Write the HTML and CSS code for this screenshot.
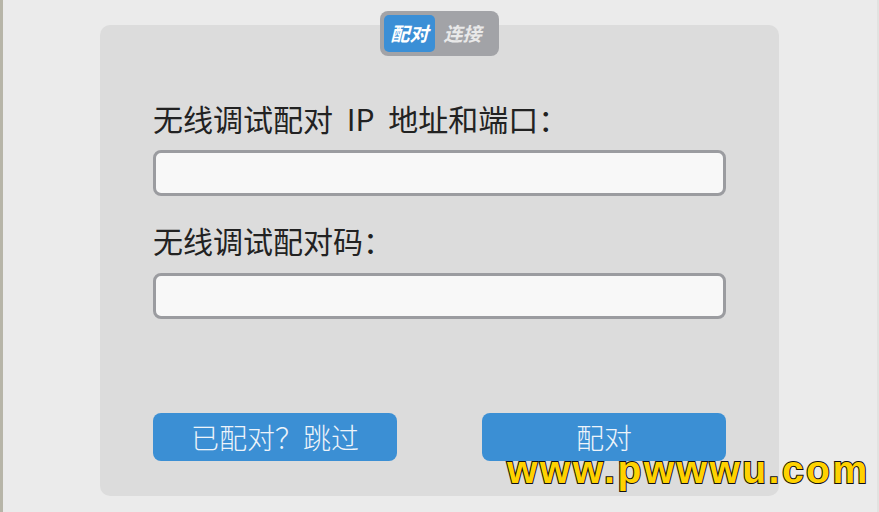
FILE: index.html
```html
<!DOCTYPE html>
<html lang="zh-CN">
<head>
  <meta charset="UTF-8" />
  <meta name="viewport" content="width=device-width, initial-scale=1.0"/>
  <title>无线调试配对</title>
  <link rel="stylesheet" href="styles.css">
</head>
<body>
  <div class="window">
    <div class="panel">
      <div class="tabs">
        <span class="tab active">配对</span>
        <span class="tab">连接</span>
      </div>

      <label class="label" for="endereco">无线调试配对 IP 地址和端口：</label>
      <input class="field" type="text" id="endereco" />

      <label class="label label-code" for="codigo">无线调试配对码：</label>
      <input class="field field-code" type="text" id="codigo" />

      <div class="actions">
        <button class="btn">已配对？跳过</button>
        <button class="btn">配对</button>
      </div>
    </div>

    <div class="watermark">www.pwwwu.com</div>
  </div>
</body>
</html>
```

FILE: styles.css
```css
html, body {
  margin: 0;
  height: 100%;
}

body {
  font-family: "Noto Sans CJK SC", "Noto Sans", sans-serif;
  background: #ebebeb;
}

.window {
  position: relative;
  height: 100%;
  box-sizing: border-box;
  padding-top: 25px;
  border-left: 3px solid #b7b5a8;
  border-right: 2px solid #e2e2e0;
}

.panel {
  position: relative;
  width: 679px;
  height: 471px;
  margin: 0 auto 0 97px;
  box-sizing: border-box;
  padding: 75px 53px 35px;
  background: #dcdcdc;
  border-radius: 10px;
  display: flex;
  flex-direction: column;
}

.tabs {
  position: absolute;
  top: -14px;
  left: 280px;
  width: 119px;
  height: 45px;
  box-sizing: border-box;
  padding: 4px;
  background: #a2a3a7;
  border-radius: 8px;
  display: flex;
  gap: 2px;
}

.tab {
  width: 51px;
  height: 37px;
  line-height: 35px;
  text-align: center;
  font-size: 19px;
  font-weight: bold;
  font-style: italic;
  color: #e9e9e9;
  border-radius: 5px;
}

.tab.active {
  background: #3b8fd6;
  color: #fff;
}

.label {
  font-size: 30px;
  line-height: 36px;
  word-spacing: 7px;
  color: #222;
}

.label-code {
  margin-top: 26px;
}

.field {
  margin-top: 14px;
  height: 46px;
  box-sizing: border-box;
  border: 3px solid #9b9ca0;
  border-radius: 8px;
  background: #f8f8f8;
  font-size: 18px;
  outline: none;
}

.field-code {
  margin-top: 15px;
}

.actions {
  margin-top: auto;
  display: flex;
  justify-content: space-between;
}

.btn {
  width: 244px;
  height: 48px;
  border: none;
  border-radius: 8px;
  background: #3b8fd4;
  color: #eef4fa;
  font-family: "Noto Sans CJK SC", sans-serif;
  font-size: 28px;
  font-weight: 300;
  padding: 0;
}

.watermark {
  position: absolute;
  left: 504px;
  top: 448px;
  font-family: "Liberation Sans", Arial, sans-serif;
  font-size: 39px;
  font-weight: bold;
  letter-spacing: 2.5px;
  color: #ffd200;
  -webkit-text-stroke: 2px #111;
  paint-order: stroke fill;
}
```
